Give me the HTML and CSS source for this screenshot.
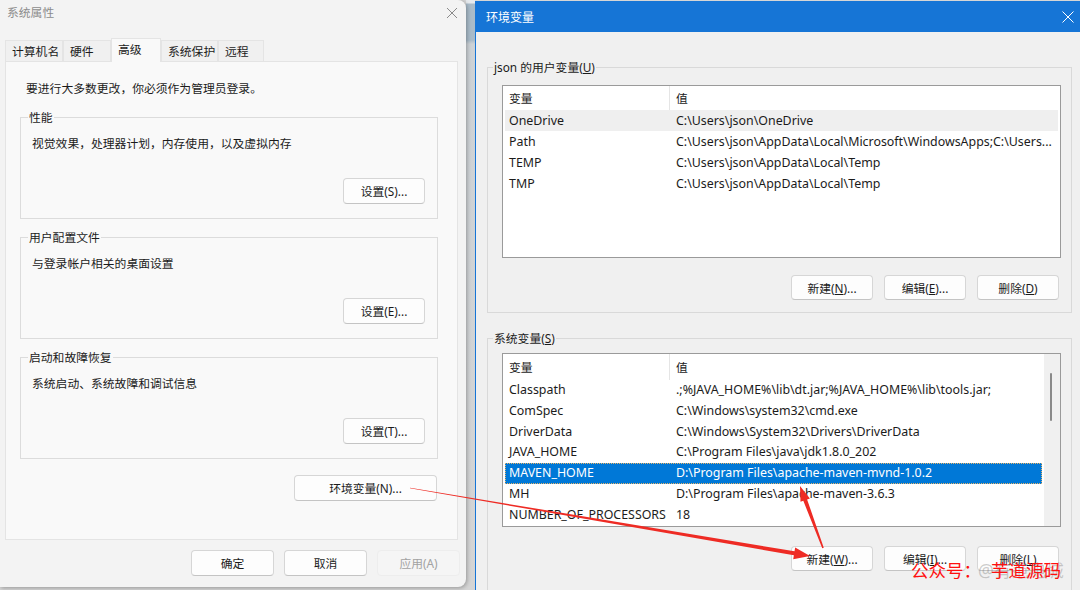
FILE: index.html
```html
<!DOCTYPE html>
<html>
<head>
<meta charset="UTF-8">
<title>环境变量</title>
<link rel="stylesheet" href="styles.css">
</head>
<body>
<div class="desk">
    <div class="sysprop">
        <div class="sys-title">
            <span>系统属性</span>
            <svg class="close" width="12" height="12" viewBox="0 0 12 12"><path d="M1 1L11 11M11 1L1 11" stroke="#8a8a8a" stroke-width="1"/></svg>
        </div>
        <div class="tabs">
            <div class="tab t1">计算机名</div>
            <div class="tab t2">硬件</div>
            <div class="tab t3 active">高级</div>
            <div class="tab t4">系统保护</div>
            <div class="tab t5">远程</div>
        </div>
        <div class="panel">
            <p class="note">要进行大多数更改，你必须作为管理员登录。</p>
            <fieldset class="group">
                <legend>性能</legend>
                <div class="group-body">
                    <p>视觉效果，处理器计划，内存使用，以及虚拟内存</p>
                    <div class="btn-row"><button class="btn">设置(S)...</button></div>
                </div>
            </fieldset>
            <fieldset class="group">
                <legend>用户配置文件</legend>
                <div class="group-body">
                    <p>与登录帐户相关的桌面设置</p>
                    <div class="btn-row"><button class="btn">设置(E)...</button></div>
                </div>
            </fieldset>
            <fieldset class="group">
                <legend>启动和故障恢复</legend>
                <div class="group-body">
                    <p>系统启动、系统故障和调试信息</p>
                    <div class="btn-row"><button class="btn">设置(T)...</button></div>
                </div>
            </fieldset>
            <div class="env-row"><button class="btn env">环境变量(N)...</button></div>
        </div>
        <div class="footer">
            <button class="btn">确定</button>
            <button class="btn">取消</button>
            <button class="btn" disabled>应用(A)</button>
        </div>
    </div>

    <div class="gap"></div>

    <div class="envwin">
        <div class="env-title">
            <span>环境变量</span>
            <svg width="12" height="12" viewBox="0 0 12 12"><path d="M0.5 0.5L11.5 11.5M11.5 0.5L0.5 11.5" stroke="#fff" stroke-width="1"/></svg>
        </div>

        <fieldset class="vgroup user">
            <legend>json 的用户变量(<u>U</u>)</legend>
            <div class="vbody">
                <div class="lv user-lv">
                    <div class="lv-main">
                        <div class="lv-head"><span>变量</span><span>值</span></div>
                        <div class="lv-row hover"><span>OneDrive</span><span>C:\Users\json\OneDrive</span></div>
                        <div class="lv-row"><span>Path</span><span>C:\Users\json\AppData\Local\Microsoft\WindowsApps;C:\Users...</span></div>
                        <div class="lv-row"><span>TEMP</span><span>C:\Users\json\AppData\Local\Temp</span></div>
                        <div class="lv-row"><span>TMP</span><span>C:\Users\json\AppData\Local\Temp</span></div>
                    </div>
                </div>
                <div class="vbtns">
                    <button class="btn">新建(<u>N</u>)...</button>
                    <button class="btn">编辑(<u>E</u>)...</button>
                    <button class="btn">删除(<u>D</u>)</button>
                </div>
            </div>
        </fieldset>

        <fieldset class="vgroup sys">
            <legend>系统变量(<u>S</u>)</legend>
            <div class="vbody">
                <div class="lv sys-lv">
                    <div class="lv-main">
                        <div class="lv-head"><span>变量</span><span>值</span></div>
                        <div class="lv-row"><span>Classpath</span><span>.;%JAVA_HOME%\lib\dt.jar;%JAVA_HOME%\lib\tools.jar;</span></div>
                        <div class="lv-row"><span>ComSpec</span><span>C:\Windows\system32\cmd.exe</span></div>
                        <div class="lv-row"><span>DriverData</span><span>C:\Windows\System32\Drivers\DriverData</span></div>
                        <div class="lv-row"><span>JAVA_HOME</span><span>C:\Program Files\java\jdk1.8.0_202</span></div>
                        <div class="lv-row selected"><span>MAVEN_HOME</span><span>D:\Program Files\apache-maven-mvnd-1.0.2</span></div>
                        <div class="lv-row"><span>MH</span><span>D:\Program Files\apache-maven-3.6.3</span></div>
                        <div class="lv-row"><span>NUMBER_OF_PROCESSORS</span><span>18</span></div>
                    </div>
                    <div class="scroll"><div class="thumb"></div></div>
                </div>
                <div class="vbtns low">
                    <button class="btn">新建(<u>W</u>)...</button>
                    <button class="btn">编辑(<u>I</u>)...</button>
                    <button class="btn">删除(<u>L</u>)</button>
                </div>
            </div>
        </fieldset>
    </div>
</div>

<!-- red annotation arrows drawn over both windows -->
<svg class="arrows" width="1080" height="590" viewBox="0 0 1080 590">
    <polygon points="410,487.7 794.5,551.3 795.2,547.4 810,556 793.2,559.2 793.9,555.3 410,488.3" fill="#ee2b24"/>
    <polygon points="823.75,547.7 807.1,499.4 809.9,498.4 800,486 800.5,501.8 803.3,500.8 822.25,548.3" fill="#ee2b24"/>
</svg>
<div class="mark-gray">@有范电城</div>
<div class="mark"><span>公众号：</span><span class="mark-name">芋道源码</span></div>
</body>
</html>
```

FILE: styles.css
```css
body {
    margin: 0;
    width: 1080px;
    height: 590px;
    overflow: hidden;
    position: relative;
    background: #d6d6d6;
    font-family: "Noto Sans", "Noto Sans CJK SC", sans-serif;
    font-size: 11.8px;
    color: #1b1b1b;
}
p { margin: 0; line-height: 16px; }

.desk {
    display: flex;
    height: 590px;
}

/* buttons */
.btn {
    font: inherit;
    color: #1b1b1b;
    background: #fdfdfd;
    border: 1px solid #d6d6d6;
    border-bottom-color: #c4c4c4;
    border-radius: 4px;
    padding: 0;
    line-height: 16px;
    box-sizing: border-box;
}
.btn[disabled] {
    background: #f5f5f5;
    border-color: #ededed;
    color: #a2a2a2;
}
.btn u { text-underline-offset: 1px; }

/* ---- system properties window ---- */
.sysprop {
    flex: none;
    width: 466px;
    height: 587px;
    background: #f3f3f3;
    border-radius: 0 8px 8px 0;
    box-shadow: 1px 1px 4px rgba(0,0,0,.3);
    position: relative;
    z-index: 1;
}
.sys-title {
    height: 30px;
    box-sizing: border-box;
    padding: 4px 8px 0 7px;
    display: flex;
    justify-content: space-between;
    line-height: 16px;
    color: #8c8c8c;
}
.sys-title .close { margin-top: 3px; }

.tabs {
    display: flex;
    align-items: flex-end;
    height: 23px;
    margin: 8px 0 0 5px;
}
.tab {
    height: 21px;
    line-height: 20px;
    box-sizing: border-box;
    padding-left: 6px;
    border: 1px solid #e4e4e4;
    border-bottom: none;
    background: #f0f0f0;
    white-space: nowrap;
}
.tab.active {
    height: 24px;
    margin-bottom: -1px;
    background: #f9f9f9;
    position: relative;
    z-index: 2;
}
.t1 { width: 58px; }
.t2 { width: 48px; }
.t3 { width: 50px; }
.t4 { width: 57px; }
.t5 { width: 46px; }

.panel {
    margin-left: 5px;
    width: 453px;
    height: 479px;
    box-sizing: border-box;
    border: 1px solid #e4e4e4;
    background: #f9f9f9;
    padding: 18px 19px 0 14px;
}
.note { margin: 0 0 13px 6px; }

.group {
    margin: 0 0 10px;
    padding: 0;
    min-width: 0;
    border: 1px solid #dcdcdc;
}
.group legend {
    margin-left: 7px;
    padding: 0 1px;
    line-height: 16px;
}
.group-body { padding: 10px 12px 14px 11px; }
.btn-row {
    display: flex;
    justify-content: flex-end;
    margin-top: 27px;
}
.btn-row .btn { width: 82px; height: 26px; }

.env-row {
    display: flex;
    justify-content: flex-end;
    margin-top: 16px;
    padding-right: 1px;
}
.env { width: 143px; height: 26px; }

.footer {
    display: flex;
    justify-content: flex-end;
    gap: 10px;
    padding: 10px 6px 0 0;
}
.footer .btn { width: 83px; height: 26px; }

/* desktop strip between the windows */
.gap {
    flex: none;
    width: 9px;
    background: linear-gradient(#e6eaee 0, #e6eaee 3px, #a9bbc9 4px, #a9bbc9 40px, #cdd2d6 44px, #d5d5d5 100%);
}

/* ---- environment variables window ---- */
.envwin {
    flex: 1;
    margin-top: 1px;
    border-left: 1px solid #1675d6;
    background: #f0f0f0;
}
.env-title {
    height: 31px;
    background: #1675d6;
    color: #fff;
    font-size: 12px;
    display: flex;
    justify-content: space-between;
    align-items: center;
    padding: 0 6px 0 10px;
}

.vgroup {
    width: 585px;
    box-sizing: border-box;
    margin: 0 0 0 11px;
    padding: 0;
    min-width: 0;
    border: 1px solid #d9d9d9;
}
.vgroup legend {
    margin-left: 5px;
    padding: 0 1px;
    line-height: 16px;
}
.user { margin-top: 27px; }
.user .vbody { padding: 10px 10px 12px 14px; }
.sys { margin-top: 17px; }
.sys .vbody { padding: 7px 10px 20px 14px; }

.lv {
    display: flex;
    box-sizing: border-box;
    background: #fff;
    border: 1px solid #9a9a9a;
}
.user-lv { height: 173px; }
.sys-lv { height: 174px; }
.lv-main {
    flex: 1;
    min-width: 0;
}
.lv-head {
    display: grid;
    grid-template-columns: 167px 1fr;
    height: 24px;
    line-height: 24px;
}
.sys-lv .lv-head { height: 26px; line-height: 26px; }
.lv-head span { padding-left: 6px; }
.lv-head span:first-child {
    border-right: 1px solid #e5e5e5;
    box-sizing: border-box;
}
.lv-row {
    display: grid;
    grid-template-columns: 167px 1fr;
    height: 21px;
    line-height: 21px;
    margin: 0 2px;
    box-sizing: border-box;
    white-space: nowrap;
    font-size: 12.4px;
}
.sys-lv .lv-row { height: 20.75px; line-height: 20.75px; }
.lv-row span {
    padding-left: 4px;
    overflow: hidden;
}
.lv-row.hover { background: #efefef; }
.lv-row.selected {
    background: #0078d7;
    color: #fff;
    outline: 1px dotted #e7b46a;
    outline-offset: -1px;
}
.scroll {
    flex: none;
    width: 16px;
    background: #f0f0f0;
}
.thumb {
    width: 2px;
    height: 48px;
    margin: 19px 0 0 6px;
    border-radius: 1px;
    background: #8a8a8a;
}

.vbtns {
    display: flex;
    justify-content: flex-end;
    gap: 11px;
    margin-top: 17px;
    padding-right: 2px;
}
.vbtns.low { margin-top: 19px; }
.vbtns .btn { width: 82px; height: 25px; }

/* annotations */
.arrows {
    position: absolute;
    left: 0;
    top: 0;
    z-index: 5;
    pointer-events: none;
}
.mark, .mark-gray {
    position: absolute;
    top: 560px;
    font-size: 17.5px;
    line-height: 20px;
    z-index: 6;
    white-space: nowrap;
}
.mark {
    left: 911px;
    color: #ff1010;
}
.mark-name { margin-left: 10px; }
.mark-gray {
    left: 978px;
    color: rgba(110,110,110,.35);
}
```
